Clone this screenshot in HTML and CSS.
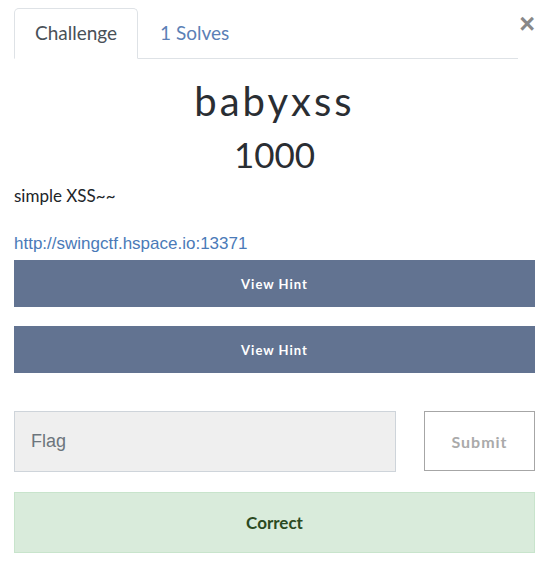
FILE: index.html
```html
<!DOCTYPE html>
<html>
<head>
<meta charset="utf-8">
<link rel="stylesheet" href="styles.css">
</head>
<body>
<div class="modal">
  <div class="head">
    <ul class="tabs">
      <li class="tab active">Challenge</li>
      <li class="tab">1 Solves</li>
    </ul>
    <span class="close">&times;</span>
  </div>
  <h2 class="name">babyxss</h2>
  <h3 class="value">1000</h3>
  <p class="desc">simple XSS~~</p>
  <a class="link" href="#">http://swingctf.hspace.io:13371</a>
  <div class="hints">
    <button class="hint">View Hint</button>
    <button class="hint">View Hint</button>
  </div>
  <div class="form">
    <input class="flag" type="text" placeholder="Flag">
    <button class="submit">Submit</button>
  </div>
  <div class="alert">Correct</div>
</div>
</body>
</html>
```

FILE: styles.css
```css
* { box-sizing: border-box; }
html, body { margin: 0; background: #fff; }
body { font-family: Lato, "Open Sans", sans-serif; color: #212529; }
.modal { padding: 8px 17px 0 14px; }
.head { display: flex; align-items: flex-start; }
.tabs { list-style: none; margin: 0; padding: 0; display: flex; width: 504px; border-bottom: 1px solid #dee2e6; height: 51px; }
.tab { font-size: 19px; color: #5b80b6; padding: 12px 20px 0 21px; height: 51px; border: 1px solid transparent; border-top-left-radius: 5px; border-top-right-radius: 5px; }
.tab.active { color: #495057; border-color: #dee2e6 #dee2e6 #fff; background: #fff; width: 124px; padding-left: 20px; }
.close { font-size: 27px; line-height: 1; color: #888; font-weight: 700; margin-left: 0; margin-top: 3px; width: 17px; text-align: right; font-family: "Liberation Sans", sans-serif; }
.name { font-weight: 400; font-size: 40px; letter-spacing: 3px; text-align: center; margin: 18px 0 0; line-height: 48px; color: #2a2e33; }
.value { font-weight: 400; font-size: 35px; text-align: center; margin: 8px 0 0; line-height: 42px; color: #2a2e33; }
.desc { font-size: 17px; margin: 9px 0 0; line-height: 24px; }
.link { display: block; font-family: "Liberation Sans", Arial, sans-serif; font-size: 17px; color: #4a7ab8; text-decoration: none; margin-top: 25px; line-height: 22px; }
.hints { display: flex; flex-direction: column; gap: 19px; margin-top: 5px; width: 521px; }
.hint { height: 47px; background: #627391; color: #fff; border: 0; font-family: Lato, sans-serif; font-size: 13px; font-weight: 700; letter-spacing: 1px; padding: 0; }
.form { display: flex; justify-content: space-between; margin-top: 38px; width: 521px; }
.flag { width: 382px; height: 61px; background: #efefef; border: 1px solid #ced4da; font-family: "Liberation Sans", Arial, sans-serif; font-size: 18px; padding: 0 16px; color: #495057; outline: none; }
.flag::placeholder { color: #6c757d; }
.submit { width: 111px; height: 60px; background: #fff; border: 1px solid #a6a6a6; color: #aaa; font-family: Lato, sans-serif; font-weight: 700; font-size: 16px; letter-spacing: 1px; padding: 0; }
.alert { margin-top: 20px; width: 521px; height: 61px; background: #d9ebdb; border: 1px solid #c8e4cc; color: #2b4a22; font-weight: 700; font-size: 17px; display: flex; align-items: center; justify-content: center; }
```
